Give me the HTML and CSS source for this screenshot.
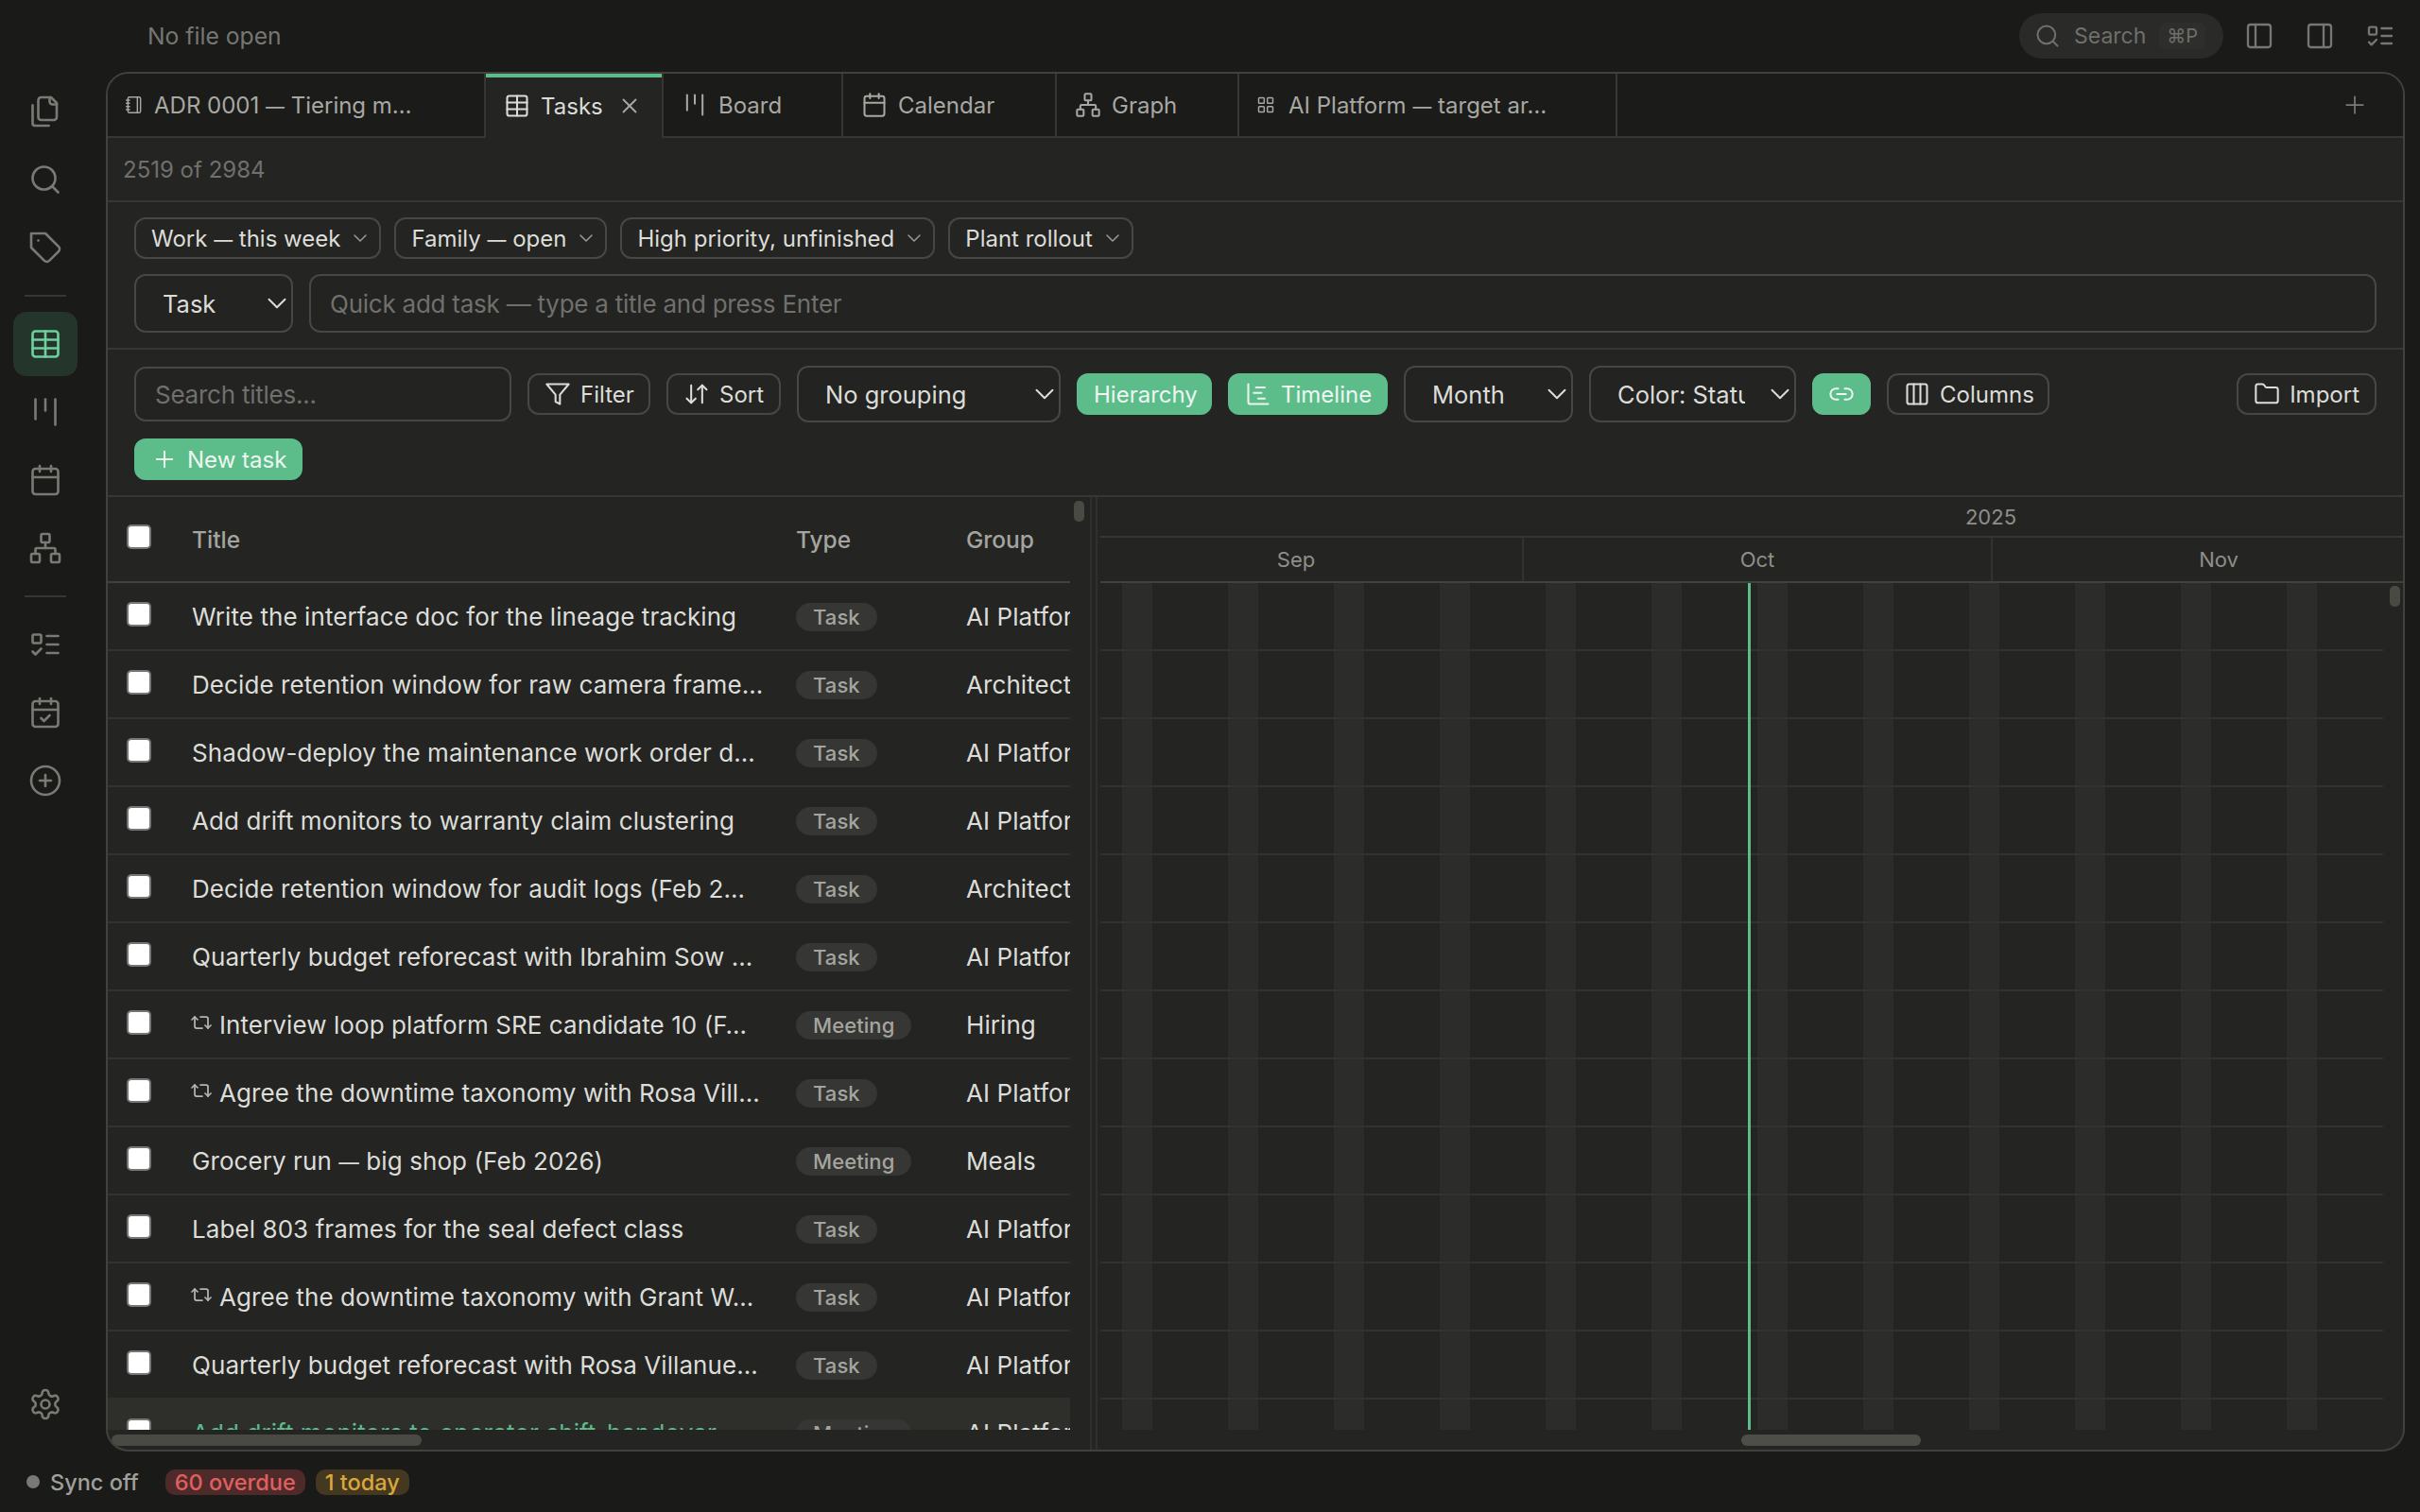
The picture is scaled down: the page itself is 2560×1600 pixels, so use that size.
FILE: index.html
```html
<!DOCTYPE html>
<html lang="en">
<head>
  <meta charset="UTF-8">
  <meta name="viewport" content="width=device-width, initial-scale=1.0">
  <title>Tasks</title>
  <link rel="stylesheet" href="styles.css">
</head>
<body>
  <!-- icon sprite -->
  <svg class="sprite" xmlns="http://www.w3.org/2000/svg">
    <symbol id="i-files" viewBox="0 0 24 24"><path d="M20 7h-3a2 2 0 0 1-2-2V2"/><path d="M9 18a2 2 0 0 1-2-2V4a2 2 0 0 1 2-2h7l4 4v10a2 2 0 0 1-2 2Z"/><path d="M3 7.6v12.8A1.6 1.6 0 0 0 4.6 22h9.8"/></symbol>
    <symbol id="i-search" viewBox="0 0 24 24"><circle cx="11" cy="11" r="8"/><path d="m21 21-4.3-4.3"/></symbol>
    <symbol id="i-tag" viewBox="0 0 24 24"><path d="M12 2H2v10l9.29 9.29c.94.94 2.48.94 3.42 0l6.58-6.58c.94-.94.94-2.48 0-3.42L12 2Z"/><path d="M7 7h.01"/></symbol>
    <symbol id="i-table" viewBox="0 0 24 24"><rect x="3" y="3" width="18" height="18" rx="2"/><path d="M12 3v18"/><path d="M3 9h18"/><path d="M3 15h18"/></symbol>
    <symbol id="i-kanban" viewBox="0 0 24 24"><path d="M5 3v14"/><path d="M12 3v8"/><path d="M19 3v18"/></symbol>
    <symbol id="i-calendar" viewBox="0 0 24 24"><path d="M8 2v4"/><path d="M16 2v4"/><rect x="3" y="4" width="18" height="18" rx="2"/><path d="M3 10h18"/></symbol>
    <symbol id="i-network" viewBox="0 0 24 24"><rect x="16" y="16" width="6" height="6" rx="1"/><rect x="2" y="16" width="6" height="6" rx="1"/><rect x="9" y="2" width="6" height="6" rx="1"/><path d="M5 16v-3a1 1 0 0 1 1-1h12a1 1 0 0 1 1 1v3"/><path d="M12 12V8"/></symbol>
    <symbol id="i-todo" viewBox="0 0 24 24"><rect x="3" y="5" width="6" height="6" rx="1"/><path d="m3 17 2 2 4-4"/><path d="M13 6h8"/><path d="M13 12h8"/><path d="M13 18h8"/></symbol>
    <symbol id="i-calcheck" viewBox="0 0 24 24"><path d="M8 2v4"/><path d="M16 2v4"/><rect x="3" y="4" width="18" height="18" rx="2"/><path d="M3 10h18"/><path d="m9 16 2 2 4-4"/></symbol>
    <symbol id="i-circleplus" viewBox="0 0 24 24"><circle cx="12" cy="12" r="10"/><path d="M8 12h8"/><path d="M12 8v8"/></symbol>
    <symbol id="i-settings" viewBox="0 0 24 24"><path d="M12.22 2h-.44a2 2 0 0 0-2 2v.18a2 2 0 0 1-1 1.73l-.43.25a2 2 0 0 1-2 0l-.15-.08a2 2 0 0 0-2.73.73l-.22.38a2 2 0 0 0 .73 2.73l.15.1a2 2 0 0 1 1 1.72v.51a2 2 0 0 1-1 1.74l-.15.09a2 2 0 0 0-.73 2.73l.22.38a2 2 0 0 0 2.73.73l.15-.08a2 2 0 0 1 2 0l.43.25a2 2 0 0 1 1 1.73V20a2 2 0 0 0 2 2h.44a2 2 0 0 0 2-2v-.18a2 2 0 0 1 1-1.73l.43-.25a2 2 0 0 1 2 0l.15.08a2 2 0 0 0 2.73-.73l.22-.39a2 2 0 0 0-.73-2.73l-.15-.08a2 2 0 0 1-1-1.74v-.5a2 2 0 0 1 1-1.74l.15-.09a2 2 0 0 0 .73-2.73l-.22-.38a2 2 0 0 0-2.73-.73l-.15.08a2 2 0 0 1-2 0l-.43-.25a2 2 0 0 1-1-1.73V4a2 2 0 0 0-2-2z"/><circle cx="12" cy="12" r="3"/></symbol>
    <symbol id="i-notebook" viewBox="0 0 24 24"><path d="M2 6h4"/><path d="M2 10h4"/><path d="M2 14h4"/><path d="M2 18h4"/><rect x="4" y="2" width="16" height="20" rx="2"/><path d="M16 2v20"/></symbol>
    <symbol id="i-grid" viewBox="0 0 24 24"><rect x="3" y="3" width="7" height="7" rx="1"/><rect x="14" y="3" width="7" height="7" rx="1"/><rect x="14" y="14" width="7" height="7" rx="1"/><rect x="3" y="14" width="7" height="7" rx="1"/></symbol>
    <symbol id="i-x" viewBox="0 0 24 24"><path d="M18 6 6 18"/><path d="m6 6 12 12"/></symbol>
    <symbol id="i-plus" viewBox="0 0 24 24"><path d="M5 12h14"/><path d="M12 5v14"/></symbol>
    <symbol id="i-chev" viewBox="0 0 24 24"><path d="m6 9 6 6 6-6"/></symbol>
    <symbol id="i-filter" viewBox="0 0 24 24"><polygon points="22 3 2 3 10 12.46 10 19 14 21 14 12.46 22 3"/></symbol>
    <symbol id="i-sort" viewBox="0 0 24 24"><path d="m3 16 4 4 4-4"/><path d="M7 20V4"/><path d="m21 8-4-4-4 4"/><path d="M17 4v16"/></symbol>
    <symbol id="i-gantt" viewBox="0 0 24 24"><path d="M10 6h8"/><path d="M12 16h6"/><path d="M3 3v16a2 2 0 0 0 2 2h16"/><path d="M8 11h7"/></symbol>
    <symbol id="i-link" viewBox="0 0 24 24"><path d="M9 17H7A5 5 0 0 1 7 7h2"/><path d="M15 7h2a5 5 0 1 1 0 10h-2"/><path d="M8 12h8"/></symbol>
    <symbol id="i-columns" viewBox="0 0 24 24"><rect x="3" y="3" width="18" height="18" rx="2"/><path d="M9 3v18"/><path d="M15 3v18"/></symbol>
    <symbol id="i-folder" viewBox="0 0 24 24"><path d="M20 20a2 2 0 0 0 2-2V8a2 2 0 0 0-2-2h-7.9a2 2 0 0 1-1.69-.9L9.6 3.9A2 2 0 0 0 7.93 3H4a2 2 0 0 0-2 2v13a2 2 0 0 0 2 2Z"/></symbol>
    <symbol id="i-repeat" viewBox="0 0 24 24"><path d="m2 9 3-3 3 3"/><path d="M13 18H7a2 2 0 0 1-2-2V6"/><path d="m22 15-3 3-3-3"/><path d="M11 6h6a2 2 0 0 1 2 2v10"/></symbol>
    <symbol id="i-left" viewBox="0 0 24 24"><rect x="3" y="3" width="18" height="18" rx="2"/><path d="M9 3v18"/></symbol>
    <symbol id="i-right" viewBox="0 0 24 24"><rect x="3" y="3" width="18" height="18" rx="2"/><path d="M15 3v18"/></symbol>
  </svg>

  <div class="app">
    <nav class="rail">
      <a class="rail-btn"><svg class="ic"><use href="#i-files"/></svg></a>
      <a class="rail-btn"><svg class="ic"><use href="#i-search"/></svg></a>
      <a class="rail-btn"><svg class="ic"><use href="#i-tag"/></svg></a>
      <div class="rail-sep"></div>
      <a class="rail-btn active"><svg class="ic"><use href="#i-table"/></svg></a>
      <a class="rail-btn"><svg class="ic"><use href="#i-kanban"/></svg></a>
      <a class="rail-btn"><svg class="ic"><use href="#i-calendar"/></svg></a>
      <a class="rail-btn"><svg class="ic"><use href="#i-network"/></svg></a>
      <div class="rail-sep"></div>
      <a class="rail-btn"><svg class="ic"><use href="#i-todo"/></svg></a>
      <a class="rail-btn"><svg class="ic"><use href="#i-calcheck"/></svg></a>
      <a class="rail-btn"><svg class="ic"><use href="#i-circleplus"/></svg></a>
      <a class="rail-btn settings"><svg class="ic"><use href="#i-settings"/></svg></a>
    </nav>

    <header class="titlebar">
      <span class="file-name">No file open</span>
      <div class="search-pill">
        <svg class="ic"><use href="#i-search"/></svg>
        <span>Search</span>
        <kbd>⌘P</kbd>
      </div>
      <svg class="ic top-ic"><use href="#i-left"/></svg>
      <svg class="ic top-ic"><use href="#i-right"/></svg>
      <svg class="ic top-ic"><use href="#i-todo"/></svg>
    </header>

    <main class="pane">
      <div class="tabs">
        <div class="tab w-adr"><svg class="ic sm"><use href="#i-notebook"/></svg><span>ADR 0001 <span class="dash">—</span> Tiering m…</span></div>
        <div class="tab w-tasks active"><svg class="ic"><use href="#i-table"/></svg><span>Tasks</span><svg class="ic close"><use href="#i-x"/></svg></div>
        <div class="tab w-board"><svg class="ic"><use href="#i-kanban"/></svg><span>Board</span></div>
        <div class="tab w-cal"><svg class="ic"><use href="#i-calendar"/></svg><span>Calendar</span></div>
        <div class="tab w-graph"><svg class="ic"><use href="#i-network"/></svg><span>Graph</span></div>
        <div class="tab w-ai"><svg class="ic sm"><use href="#i-grid"/></svg><span>AI Platform <span class="dash">—</span> target ar…</span></div>
        <svg class="ic tab-plus"><use href="#i-plus"/></svg>
      </div>

      <div class="count">2519 of 2984</div>

      <section class="filters">
        <div class="chips">
          <button class="btn"><span>Work <span class="dash">—</span> this week</span><svg class="ic chev"><use href="#i-chev"/></svg></button>
          <button class="btn"><span>Family <span class="dash">—</span> open</span><svg class="ic chev"><use href="#i-chev"/></svg></button>
          <button class="btn">High priority, unfinished<svg class="ic chev"><use href="#i-chev"/></svg></button>
          <button class="btn">Plant rollout<svg class="ic chev"><use href="#i-chev"/></svg></button>
        </div>
        <div class="quick">
          <div class="select s-task"><span>Task</span><svg class="ic"><use href="#i-chev"/></svg></div>
          <input class="field quick-input" type="text" placeholder="Quick add task — type a title and press Enter">
        </div>
      </section>

      <section class="toolbar">
        <input class="field search-titles" type="text" placeholder="Search titles...">
        <button class="btn b-filter"><svg class="ic"><use href="#i-filter"/></svg>Filter</button>
        <button class="btn b-sort"><svg class="ic"><use href="#i-sort"/></svg>Sort</button>
        <div class="select s-group"><span>No grouping</span><svg class="ic"><use href="#i-chev"/></svg></div>
        <button class="btn on b-hier">Hierarchy</button>
        <button class="btn on b-time"><svg class="ic"><use href="#i-gantt"/></svg>Timeline</button>
        <div class="select s-month"><span>Month</span><svg class="ic"><use href="#i-chev"/></svg></div>
        <div class="select s-color"><span>Color: Status</span><svg class="ic"><use href="#i-chev"/></svg></div>
        <button class="btn on link-btn"><svg class="ic"><use href="#i-link"/></svg></button>
        <button class="btn b-cols"><svg class="ic"><use href="#i-columns"/></svg>Columns</button>
        <button class="btn import"><svg class="ic"><use href="#i-folder"/></svg>Import</button>
        <button class="btn on new-task"><svg class="ic"><use href="#i-plus"/></svg>New task</button>
      </section>

      <section class="split">
        <div class="left">
          <div class="thead grid-row">
            <span class="cb-cell"><input type="checkbox"></span>
            <span>Title</span>
            <span>Type</span>
            <span>Group</span>
          </div>
          <div class="tbody">
            <div class="grid-row"><span class="cb-cell"><input type="checkbox"></span><span class="title"><span>Write the interface doc for the lineage tracking</span></span><span><i class="pill">Task</i></span><span class="group">AI Platform</span></div>
            <div class="grid-row"><span class="cb-cell"><input type="checkbox"></span><span class="title"><span>Decide retention window for raw camera frame…</span></span><span><i class="pill">Task</i></span><span class="group">Architecture</span></div>
            <div class="grid-row"><span class="cb-cell"><input type="checkbox"></span><span class="title"><span>Shadow-deploy the maintenance work order d…</span></span><span><i class="pill">Task</i></span><span class="group">AI Platform</span></div>
            <div class="grid-row"><span class="cb-cell"><input type="checkbox"></span><span class="title"><span>Add drift monitors to warranty claim clustering</span></span><span><i class="pill">Task</i></span><span class="group">AI Platform</span></div>
            <div class="grid-row"><span class="cb-cell"><input type="checkbox"></span><span class="title"><span>Decide retention window for audit logs (Feb 2…</span></span><span><i class="pill">Task</i></span><span class="group">Architecture</span></div>
            <div class="grid-row"><span class="cb-cell"><input type="checkbox"></span><span class="title"><span>Quarterly budget reforecast with Ibrahim Sow …</span></span><span><i class="pill">Task</i></span><span class="group">AI Platform</span></div>
            <div class="grid-row"><span class="cb-cell"><input type="checkbox"></span><span class="title"><svg class="ic rep"><use href="#i-repeat"/></svg><span>Interview loop platform SRE candidate 10 (F…</span></span><span><i class="pill">Meeting</i></span><span class="group">Hiring</span></div>
            <div class="grid-row"><span class="cb-cell"><input type="checkbox"></span><span class="title"><svg class="ic rep"><use href="#i-repeat"/></svg><span>Agree the downtime taxonomy with Rosa Vill…</span></span><span><i class="pill">Task</i></span><span class="group">AI Platform</span></div>
            <div class="grid-row"><span class="cb-cell"><input type="checkbox"></span><span class="title"><span>Grocery run <span class="dash">—</span> big shop (Feb 2026)</span></span><span><i class="pill">Meeting</i></span><span class="group">Meals</span></div>
            <div class="grid-row"><span class="cb-cell"><input type="checkbox"></span><span class="title"><span>Label 803 frames for the seal defect class</span></span><span><i class="pill">Task</i></span><span class="group">AI Platform</span></div>
            <div class="grid-row"><span class="cb-cell"><input type="checkbox"></span><span class="title"><svg class="ic rep"><use href="#i-repeat"/></svg><span>Agree the downtime taxonomy with Grant W…</span></span><span><i class="pill">Task</i></span><span class="group">AI Platform</span></div>
            <div class="grid-row"><span class="cb-cell"><input type="checkbox"></span><span class="title"><span>Quarterly budget reforecast with Rosa Villanue…</span></span><span><i class="pill">Task</i></span><span class="group">AI Platform</span></div>
            <div class="grid-row hot"><span class="cb-cell"><input type="checkbox"></span><span class="title"><span>Add drift monitors to operator shift-handover</span></span><span><i class="pill">Meeting</i></span><span class="group">AI Platform</span></div>
          </div>
          <div class="hscroll"><div class="thumb thumb-left"></div></div>
          <div class="vthumb vthumb-left"></div>
        </div>

        <div class="divider"></div>

        <div class="gantt">
          <div class="year">2025</div>
          <div class="months">
            <div class="month m30">Sep</div>
            <div class="month m31">Oct</div>
            <div class="month m30">Nov</div>
          </div>
          <div class="gantt-body">
            <div class="today"></div>
          </div>
          <div class="hscroll"><div class="thumb thumb-right"></div></div>
          <div class="vthumb vthumb-right"></div>
        </div>
      </section>
    </main>

    <footer class="status">
      <span class="sync-dot"></span>
      <span class="sync">Sync off</span>
      <span class="badge overdue">60 overdue</span>
      <span class="badge due-today">1 today</span>
    </footer>
  </div>
</body>
</html>
```

FILE: styles.css
```css
* { box-sizing: border-box; }
html, body { margin: 0; height: 100%; }
body { background: #1a1a18; color: #dcddd8; font-family: Inter, "Noto Sans", sans-serif; font-size: 26px; overflow: hidden; }
.sprite { display: none; }

.ic { width: 28px; height: 28px; fill: none; stroke: currentColor; stroke-width: 1.75; stroke-linecap: round; stroke-linejoin: round; flex-shrink: 0; }
.ic.sm { width: 20px; height: 20px; }
.dash { font-size: .83em; }

.app { display: grid; grid-template-columns: 112px 1fr; grid-template-rows: 76px 1460px 64px; width: 2560px; height: 1600px; }

/* left rail */
.rail { grid-row: 1 / 3; display: flex; flex-direction: column; align-items: center; padding: 84px 16px 16px 0; gap: 4px; }
.rail-btn { width: 68px; height: 68px; border-radius: 14px; display: flex; align-items: center; justify-content: center; color: #7a7a75; }
.rail-btn .ic { width: 36px; height: 36px; }
.rail-btn.active { background: #24352b; color: #6fd09d; }
.rail-btn.settings { margin-top: auto; }
.rail-sep { width: 44px; height: 2px; background: #363634; margin: 12px 0; }

/* title bar */
.titlebar { display: flex; align-items: center; padding: 0 26px 0 44px; gap: 32px; color: #767672; }
.file-name { margin-right: auto; font-size: 24.7px; }
.search-pill { width: 216px; height: 48px; border-radius: 24px; background: #2a2a28; display: flex; align-items: center; padding: 0 16px; gap: 14px; font-size: 23px; margin-right: -10px; color: #6f6f6b; }
.search-pill kbd { font-family: Inter, "DejaVu Sans", sans-serif; font-size: 20px; height: 28px; padding: 0 8px; line-height: 28px; background: #2e2e2c; border-radius: 6px; }
.top-ic { width: 32px; height: 32px; }

/* pane */
.pane { margin-right: 16px; background: #242422; border: 2px solid #41413e; border-radius: 24px; overflow: hidden; display: flex; flex-direction: column; }

.tabs { height: 68px; flex-shrink: 0; display: flex; background: #1b1b19; border-bottom: 2px solid #363633; position: relative; }
.tab { display: flex; align-items: center; gap: 11px; padding-left: 19px; border-right: 2px solid #363633; color: #a8a8a3; font-size: 24px; white-space: nowrap; }
.w-adr { width: 400px; padding-left: 18px; }
.w-tasks { width: 188px; }
.w-board { width: 190px; }
.w-cal { width: 226px; }
.w-graph { width: 193px; }
.w-ai { width: 400px; padding-left: 18px; gap: 14px; }
.tab.active { background: #242422; color: #dcddd8; box-shadow: inset 0 4px 0 #5cbd8b; margin-bottom: -2px; }
.close { margin-left: 4px; width: 26px; height: 26px; color: #a8a8a3; }
.tab-plus { margin: auto 36px auto auto; width: 30px; height: 30px; color: #7a7a75; stroke-width: 1.4; }

.count { height: 68px; flex-shrink: 0; display: flex; align-items: center; padding-left: 16px; border-bottom: 2px solid #363633; color: #70706c; font-size: 24px; }

.filters { height: 156px; flex-shrink: 0; padding: 16px 28px; border-bottom: 2px solid #363633; display: flex; flex-direction: column; gap: 16px; }
.chips { display: flex; gap: 14px; }
.quick { display: flex; gap: 17px; }

/* buttons and inputs */
.btn { height: 44px; display: flex; align-items: center; gap: 10px; padding: 0 16px; background: #242422; border: 2px solid #474744; border-radius: 12px; color: #dcddd8; font: inherit; font-size: 24px; white-space: nowrap; }
.btn .chev { width: 24px; height: 24px; margin-right: -8px; margin-left: -1px; color: #9a9a95; stroke-width: 1.5; }
.btn.on { background: #5cbd8b; border-color: #5cbd8b; color: #eef6f0; }
.b-filter { width: 130px; }
.b-sort { width: 121px; }
.b-hier { width: 143px; }
.b-time { width: 169px; }
.b-cols { width: 172px; }
.field { height: 62px; background: #232321; border: 2px solid #474744; border-radius: 12px; color: #dcddd8; font: inherit; padding: 0 20px; outline: none; }
.field::placeholder { color: #70706c; opacity: 1; letter-spacing: -.24px; }
.select { height: 62px; display: flex; align-items: center; justify-content: space-between; padding-left: 28px; background: #232321; border: 2px solid #474744; border-radius: 12px; color: #dcddd8; font-size: 25.5px; white-space: nowrap; }
.select .ic { width: 34px; height: 34px; margin-right: -2px; stroke-width: 1.4; }
.select span { overflow: hidden; }
.s-task { width: 168px; }
.s-group { width: 279px; }
.s-month { width: 179px; }
.s-color { width: 219px; }
.s-color span { width: 135px; }
.quick-input { flex: 1; }

.toolbar { height: 156px; flex-shrink: 0; padding: 17px 28px 0; border-bottom: 2px solid #363633; display: flex; flex-wrap: wrap; align-items: center; align-content: flex-start; column-gap: 17px; row-gap: 17px; }
.search-titles { width: 399px; height: 58px; }
.link-btn { width: 62px; padding: 0; justify-content: center; }
.import { margin-left: auto; }
.new-task { width: 178px; }
.toolbar .select { height: 60px; }

/* table */
.split { flex: 1; min-height: 0; display: flex; }
.left { width: 1038px; flex-shrink: 0; display: flex; flex-direction: column; position: relative; }
.grid-row { display: grid; grid-template-columns: 89px 639px 180px 110px; width: 1018px; height: 72px; align-items: center; border-bottom: 2px solid #32322f; letter-spacing: .08px; }
.thead { height: 91px; border-bottom-color: #41413e; color: #a5a59f; font-size: 24.5px; font-weight: 500; letter-spacing: 0; }
.thead .cb-cell { margin-top: -5px; }
.cb-cell { display: flex; padding-left: 20px; margin-top: -4px; }
input[type=checkbox] { appearance: none; margin: 0; width: 26px; height: 26px; background: #fff; border: 2px solid #767676; border-radius: 5px; }
.tbody { flex: 1; min-height: 0; overflow: hidden; }
.title { display: flex; align-items: center; gap: 7px; white-space: nowrap; }
.rep { width: 24px; height: 24px; margin: -4px 0 0 -2px; color: #b5b5b0; }
.pill { display: inline-block; height: 30px; line-height: 30px; padding: 0 18px; border-radius: 15px; background: #363634; color: #a5a59f; font-size: 22px; font-style: normal; font-weight: 500; }
.group { overflow: hidden; white-space: nowrap; }
.hot { background: #2e2e2b; border-bottom: 0; margin-top: -2px; height: 74px; }
.hot .title { color: #5cbd8b; }

.hscroll { height: 21px; flex-shrink: 0; padding-top: 5px; }
.thumb { height: 12px; border-radius: 6px; background: #4a4a45; }
.thumb-left { margin-left: 4px; width: 328px; }
.thumb-right { margin-left: 678px; width: 190px; background: #4e4e48; }
.vthumb { position: absolute; width: 11px; height: 22px; border-radius: 5px; background: #4a4a45; }
.vthumb-left { top: 4px; left: 1022px; }
.vthumb-right { top: 94px; right: 3px; }

.divider { width: 8px; margin: 0 3px 0 1px; flex-shrink: 0; border-left: 2px solid #30302d; border-right: 2px solid #30302d; }

/* timeline */
.gantt { flex: 1; min-width: 0; display: flex; flex-direction: column; position: relative; overflow: hidden; }
.year { height: 43px; flex-shrink: 0; padding-left: 506px; text-align: center; line-height: 43px; border-bottom: 2px solid #363633; color: #8f8f8a; font-size: 22px; }
.months { height: 48px; flex-shrink: 0; display: flex; margin-left: -32px; border-bottom: 2px solid #41413e; }
.month { flex-shrink: 0; text-align: center; line-height: 46px; border-right: 2px solid #32322f; color: #8f8f8a; font-size: 22px; }
.m30 { width: 480px; }
.m31 { width: 496px; }
.gantt-body { flex: 1; min-height: 0; margin-right: 21px; position: relative; background-image: linear-gradient(180deg, transparent 70px, #32322f 70px), linear-gradient(90deg, transparent 23px, #2c2c2a 23px, #2c2c2a 55px, transparent 55px); background-size: 100% 72px, 112px 100%; }
.today { position: absolute; top: 0; bottom: 0; left: 685px; width: 3px; background: #5cbd8b; }

/* status bar */
.status { grid-column: 1 / 3; display: flex; align-items: center; padding: 0 0 0 28px; }
.sync-dot { width: 14px; height: 14px; border-radius: 50%; background: #7a7a75; margin-right: 11px; }
.sync { color: #a0a09b; font-size: 23.5px; font-weight: 500; margin-right: 28px; }
.badge { height: 27px; line-height: 27px; padding: 0 10px; border-radius: 10px; font-size: 23.5px; font-weight: 500; margin-right: 11px; }
.overdue { background: #4f2a2a; color: #e0605f; }
.due-today { background: #453820; color: #d9a73c; }
```
